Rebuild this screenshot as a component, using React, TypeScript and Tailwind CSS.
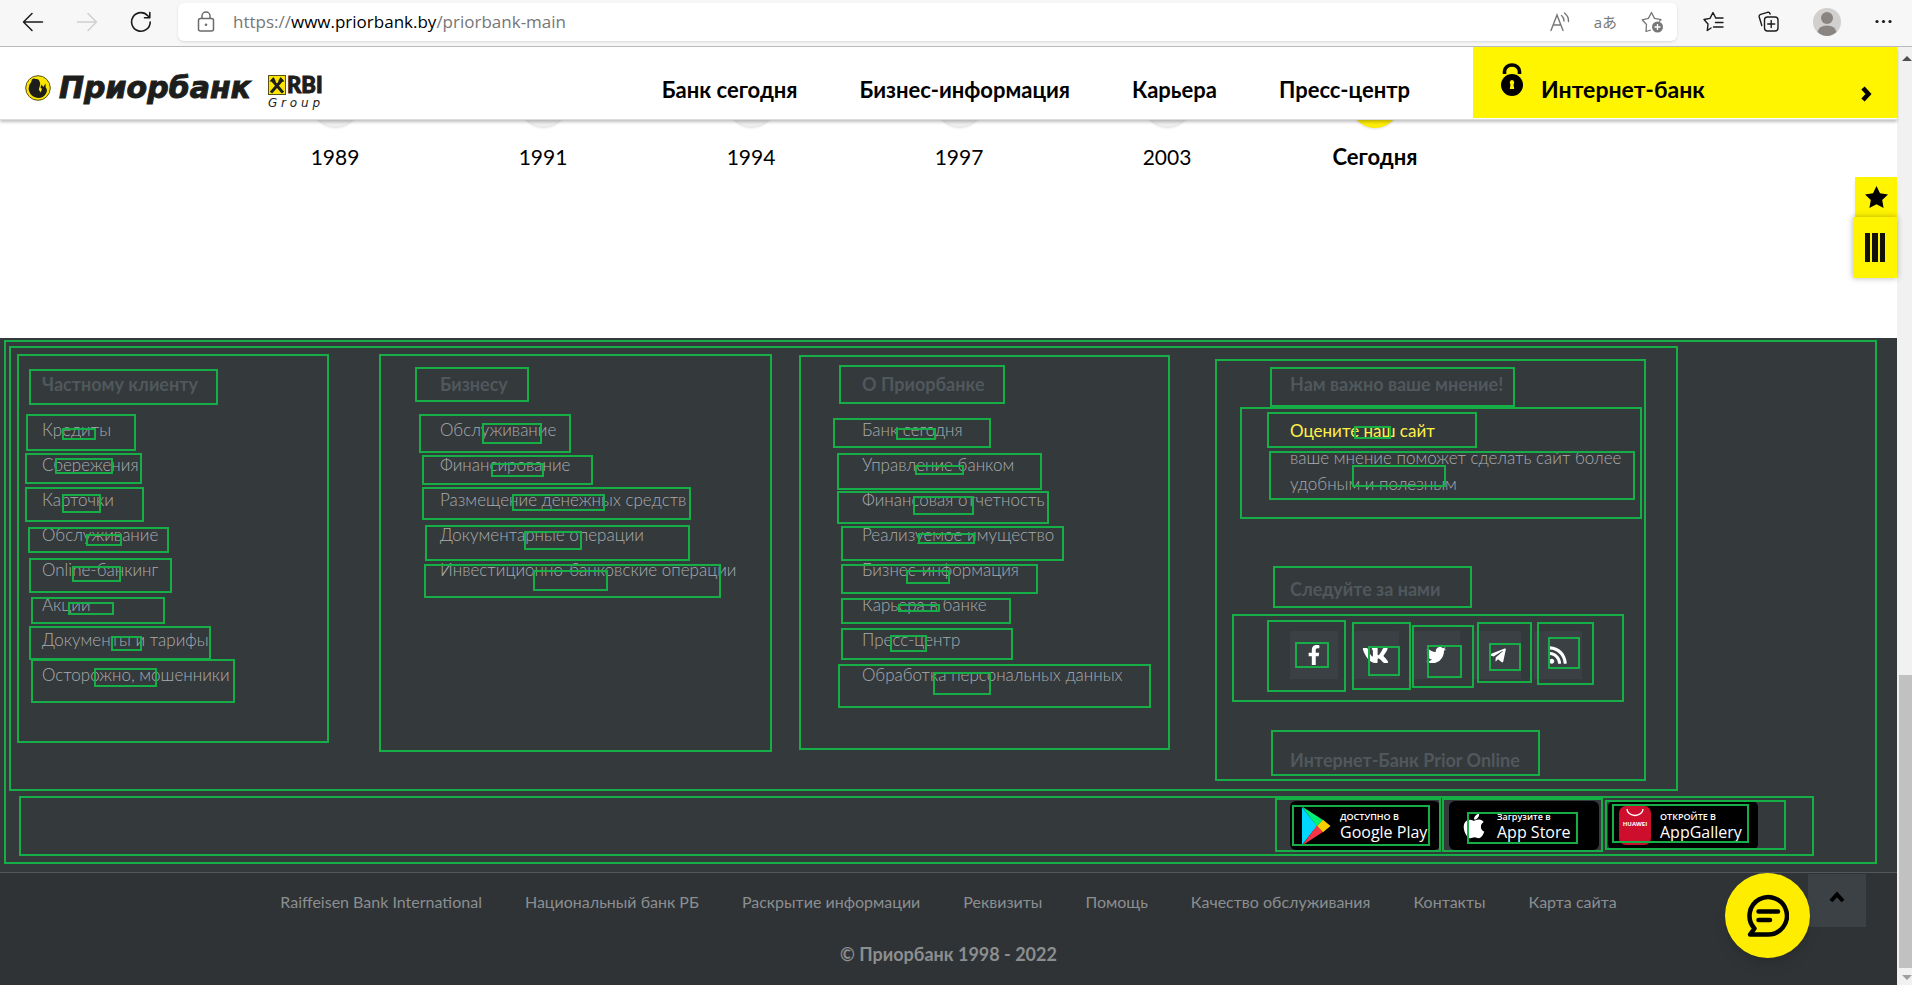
import { ReactNode } from "react";
import { FaFacebookF, FaTwitter, FaVk, FaTelegramPlane, FaRss, FaApple } from "react-icons/fa";

const mainNav = ["Банк сегодня", "Бизнес-информация", "Карьера", "Пресс-центр"];
const years = ["1989", "1991", "1994", "1997", "2003", "Сегодня"];

const columns = [
  {
    title: "Частному клиенту",
    links: ["Кредиты", "Сбережения", "Карточки", "Обслуживание", "Online-банкинг", "Акции", "Документы и тарифы", "Осторожно, мошенники"],
  },
  {
    title: "Бизнесу",
    links: ["Обслуживание", "Финансирование", "Размещение денежных средств", "Документарные операции", "Инвестиционно-банковские операции"],
  },
  {
    title: "О Приорбанке",
    links: ["Банк сегодня", "Управление банком", "Финансовая отчетность", "Реализуемое имущество", "Бизнес-информация", "Карьера в банке", "Пресс-центр", "Обработка персональных данных"],
  },
];

const bottomLinks = ["Raiffeisen Bank International", "Национальный банк РБ", "Раскрытие информации", "Реквизиты", "Помощь", "Качество обслуживания", "Контакты", "Карта сайта"];

const socials: { label: string; icon: ReactNode }[] = [
  { label: "Facebook", icon: <FaFacebookF size={20} /> },
  { label: "VK", icon: <FaVk size={27} /> },
  { label: "Twitter", icon: <FaTwitter size={20} /> },
  { label: "Telegram", icon: <FaTelegramPlane size={19} /> },
  { label: "RSS", icon: <FaRss size={20} /> },
];

// Region outlines: left, top, right, bottom, measured from the top left of the page.
const regions: [number, number, number, number][] = [
  [5, 341, 1876, 863], [10, 347, 1677, 790],
  [18, 355, 328, 742], [30, 370, 217, 404],
  [27, 415, 135, 450], [63, 429, 95, 439],
  [26, 454, 141, 483], [56, 459, 112, 473],
  [26, 488, 143, 521], [63, 495, 100, 512],
  [29, 528, 168, 552], [87, 535, 121, 545],
  [30, 559, 171, 592], [73, 567, 120, 581],
  [32, 598, 164, 623], [69, 603, 113, 614],
  [30, 627, 210, 659], [112, 637, 141, 650],
  [32, 660, 234, 702], [95, 669, 156, 686],
  [380, 355, 771, 751], [416, 368, 528, 401],
  [420, 415, 570, 452], [483, 424, 541, 443],
  [423, 456, 592, 484], [492, 464, 543, 476],
  [423, 488, 690, 519], [513, 495, 604, 510],
  [426, 526, 689, 560], [525, 532, 581, 549],
  [425, 565, 720, 597], [534, 571, 607, 590],
  [800, 356, 1169, 749], [840, 366, 1004, 403],
  [834, 419, 990, 447], [897, 429, 935, 439],
  [838, 454, 1041, 489], [916, 466, 963, 474],
  [838, 492, 1048, 523], [914, 497, 973, 514],
  [842, 527, 1063, 560], [919, 534, 974, 543],
  [842, 565, 1037, 593], [907, 571, 949, 583],
  [842, 599, 1010, 623], [899, 605, 939, 611],
  [842, 629, 1012, 659], [891, 636, 926, 651],
  [839, 665, 1150, 707], [934, 673, 990, 694],
  [1216, 360, 1645, 780], [1271, 368, 1514, 406],
  [1241, 408, 1641, 518],
  [1268, 413, 1476, 447], [1355, 427, 1390, 438],
  [1270, 452, 1634, 499], [1353, 466, 1445, 486],
  [1274, 567, 1471, 607], [1233, 615, 1623, 701],
  [1268, 621, 1345, 691], [1296, 643, 1328, 667],
  [1353, 623, 1410, 689], [1369, 647, 1399, 675],
  [1413, 626, 1473, 687], [1428, 646, 1461, 677],
  [1478, 623, 1531, 682], [1490, 644, 1520, 670],
  [1538, 623, 1593, 684], [1549, 638, 1579, 668],
  [1272, 731, 1539, 775],
  [20, 797, 1813, 855],
  [1276, 799, 1440, 851], [1293, 806, 1429, 845],
  [1443, 799, 1602, 851], [1468, 813, 1577, 843],
  [1606, 801, 1785, 849], [1613, 805, 1748, 842],
];

function Outline() {
  return (
    <svg aria-hidden="true" className="pointer-events-none absolute inset-0 z-20 h-full w-full overflow-visible">
      <g transform="translate(0 -338)" fill="none" stroke="#16ae46" strokeWidth="2">
        {regions.map(([l, t, r, b], i) => (
          <rect key={i} x={l} y={t} width={r - l} height={b - t} />
        ))}
      </g>
    </svg>
  );
}

function BrowserBar() {
  return (
    <div className="flex h-[47px] items-center border-b border-[#bcbcbc] bg-[#f7f7f7] font-['Open_Sans','Noto_Sans_CJK_JP',sans-serif]">
      <div className="flex w-[178px] shrink-0 items-center gap-8 pb-[3px] pl-[22px] text-[#1b1b1b]">
        <button aria-label="Назад">
          <svg width="22" height="22" viewBox="0 0 22 22" fill="none" stroke="currentColor" strokeWidth="1.5" strokeLinecap="round" strokeLinejoin="round"><path d="M20.5 11H1.5M10 2.500L1.500 11L10 19.500" /></svg>
        </button>
        <button aria-label="Вперёд" className="text-[#cfcfcf]">
          <svg width="22" height="22" viewBox="0 0 22 22" fill="none" stroke="currentColor" strokeWidth="1.5" strokeLinecap="round" strokeLinejoin="round"><path d="M1.5 11H20.5M12 2.500L20.500 11L12 19.500" /></svg>
        </button>
        <button aria-label="Обновить">
          <svg width="22" height="22" viewBox="0 0 22 22" fill="none" stroke="currentColor" strokeWidth="1.6" strokeLinecap="round" strokeLinejoin="round"><path d="M20.200 11A9.300 9.300 0 1 1 17.800 4.700L19.500 6.600M19.800 1.500V6.800H14.500" /></svg>
        </button>
      </div>
      <div className="mb-[3px] flex h-[38px] flex-1 items-center rounded-md bg-white pr-[13px] pl-[19px] shadow-sm">
        <svg className="mr-[18px] shrink-0" width="18" height="22" viewBox="0 0 18 22" fill="none" stroke="#6b6b6b" strokeWidth="1.500"><rect x="1.500" y="7.500" width="15" height="12.500" rx="2" /><path d="M5 7.500V5a4 4 0 0 1 8 0V7.500" /><circle cx="9" cy="13.700" r="1.300" fill="#6b6b6b" stroke="none" /></svg>
        <span className="flex-1 text-[17px] text-[#767676]">https://<span className="text-black">www.priorbank.by</span>/priorbank-main</span>
        <div className="flex items-center gap-6 text-[#777]">
          <button aria-label="Прочесть вслух">
            <svg width="20" height="20" viewBox="0 0 20 20" fill="none" stroke="currentColor" strokeWidth="1.400" strokeLinecap="round"><path d="M1 18.500L7 3L13 18.500M3 13H11" /><path d="M11.500 3.500Q14 5.500 14 9M14.500 1Q18.800 4.500 18.500 9.500" /></svg>
          </button>
          <button aria-label="Перевести" className="text-[15px] leading-5">aあ</button>
          <button aria-label="Добавить в избранное">
            <svg width="23" height="22" viewBox="0 0 23 22" fill="none" stroke="currentColor" strokeWidth="1.300" strokeLinejoin="round"><path d="M10 19L5 20.500L5.500 13.500L1.200 8.800L7.400 7.400L10.500 1.500L13.500 7.400L20 8.700L18 10.500" /><circle cx="16.500" cy="16" r="5.500" fill="currentColor" stroke="none" /><path d="M16.500 13V19M13.500 16H19.500" stroke="#fff" /></svg>
          </button>
        </div>
      </div>
      <div className="flex w-[235px] shrink-0 items-center justify-between pr-5 pb-[3px] pl-[26px] text-[#1b1b1b]">
        <button aria-label="Избранное">
          <svg width="21" height="21" viewBox="0 0 21 21" fill="none" stroke="currentColor" strokeWidth="1.400" strokeLinecap="round" strokeLinejoin="round"><path d="M8 17L4.300 19.500L5 13L1 8.500L7 7.400L10 1.500L12.500 6.500M12.500 7H20M12.500 11.500H20M10.500 16H20" /></svg>
        </button>
        <button aria-label="Коллекции">
          <svg width="21" height="21" viewBox="0 0 21 21" fill="none" stroke="currentColor" strokeWidth="1.400" strokeLinecap="round" strokeLinejoin="round"><rect x="6.500" y="6" width="13.500" height="14" rx="3" /><path d="M13.200 9.500V16.500M9.700 13H16.700M3.800 14.500L1.200 6Q0.800 4 2.700 3.300L9.500 1.300Q11.500 0.800 12.200 3" /></svg>
        </button>
        <button aria-label="Профиль">
          <svg width="28" height="28" viewBox="0 0 28 28"><circle cx="14" cy="14" r="14" fill="#d2d0ce" /><circle cx="14" cy="10" r="6" fill="#8a8580" /><path d="M4.500 24Q6 17.500 14 17.500T23.500 24Q19 28 14 28T4.500 24Z" fill="#8a8580" /></svg>
        </button>
        <button aria-label="Меню">
          <svg width="17" height="5" viewBox="0 0 17 5" fill="currentColor"><circle cx="2" cy="2.500" r="1.600" /><circle cx="8.500" cy="2.500" r="1.600" /><circle cx="15" cy="2.500" r="1.600" /></svg>
        </button>
      </div>
    </div>
  );
}

function Logo() {
  return (
    <a href="#" className="flex items-start pt-7 pl-[25px] text-[#1d1d1b]">
      <svg width="26" height="26" viewBox="0 0 26 26"><circle cx="13" cy="13" r="12.300" fill="#fce500" stroke="#55521c" strokeWidth="1" /><path d="M4 16Q2.800 11 6 7.500L7 4.500Q9 3 10.500 4Q13.500 3.500 14.500 6Q16 9 14.500 12L13.800 14.500L15.500 17.500L17 14L15.500 12.500L16.500 9.500L18.300 12L20.500 8.500L20.700 12.500Q23 15 21 18.500Q18.500 23 13 23Q6 22 4 16Z" fill="#1d1d1b" /></svg>
      <span className="ml-2 w-[201px] font-['DejaVu_Sans',sans-serif] text-[30px] leading-[26px] font-bold whitespace-nowrap italic [-webkit-text-stroke:1px_#1d1d1b]">Приорбанк</span>
      <span className="ml-2 flex flex-col gap-[2px]">
        <span className="flex items-center gap-px">
          <svg width="18" height="20" viewBox="0 0 18 20"><rect x="0.500" y="0.500" width="17" height="19" fill="#fce500" stroke="#55521c" /><path d="M4 16.500L13.500 5.500M14 16.500L4.500 5.500" stroke="#1d1d1b" strokeWidth="3" strokeLinecap="square" /><path d="M1.500 6.500L5.500 2L8 6.500Z M16.500 6.500L12.500 2L10 6.500Z" fill="#1d1d1b" /></svg>
          <span className="text-[22px] leading-5 font-black [-webkit-text-stroke:1px_#1d1d1b]">RBI</span>
        </span>
        <span className="font-['DejaVu_Sans',sans-serif] text-[12px] leading-3 whitespace-nowrap italic">G r o u p</span>
      </span>
    </a>
  );
}

function Header() {
  return (
    <header className="relative z-10 flex h-[73px] border-b border-[#dcdcdc] bg-white shadow-[0_2px_3px_rgba(0,0,0,0.25)]">
      <Logo />
      <nav className="ml-auto flex items-center gap-[62px] pt-3 pr-[63px] text-[22px] font-bold text-black">
        {mainNav.map((n) => (
          <a key={n} href="#" className="whitespace-nowrap">{n}</a>
        ))}
      </nav>
      <a href="#" className="flex h-[71px] w-[424px] items-center bg-[#fff500] pt-[14px] pr-[25px] pl-[27px] text-[23px] font-bold text-black">
        <svg className="-mt-5 shrink-0" width="24" height="34" viewBox="0 0 24 34"><path d="M4.500 11V8.500A7.500 6.500 0 0 1 19.500 8.500V11" fill="none" stroke="#000" strokeWidth="3.600" /><circle cx="12" cy="22" r="11" /><path d="M12 17A2.700 2.700 0 0 0 10.500 21.500L9.800 26H14.200L13.500 21.500A2.700 2.700 0 0 0 12 17Z" fill="#fff500" /></svg>
        <span className="ml-[17px] flex-1">Интернет-банк</span>
        <svg className="mt-2" width="11" height="16" viewBox="0 0 11 16" fill="none" stroke="#000" strokeWidth="4.500"><path d="M2 2L7.500 8L2 14" /></svg>
      </a>
    </header>
  );
}

function Timeline() {
  return (
    <section className="relative h-[218px] bg-white">
      <ol className="grid grid-cols-[repeat(6,208fr)_418fr] pl-[231px]">
        {years.map((y, i) => {
          const current = i === years.length - 1;
          return (
            <li key={y} className="flex flex-col items-center text-[22px] leading-7 text-black">
              <span className={current ? "-mt-10 mb-[15px] size-12 rounded-full bg-[#ffed00] shadow" : "-mt-10 mb-4 size-[47px] rounded-full bg-[#efefef] shadow-sm"} />
              <span className={current ? "font-bold" : "text-[21px]"}>{y}</span>
            </li>
          );
        })}
      </ol>
      <div className="absolute top-[57px] right-0 flex flex-col items-end">
        <button aria-label="Избранное" className="flex h-10 w-[42px] items-center justify-center bg-[#fff500] shadow-md">
          <svg width="23" height="22" viewBox="0 0 23 22"><path d="M11.500 0L15 7.300L23 8.400L17.200 14L18.600 22L11.500 18.200L4.400 22L5.800 14L0 8.400L8 7.300Z" /></svg>
        </button>
        <button aria-label="Сравнение" className="flex h-[61px] w-11 items-center justify-center gap-[2px] bg-[#fff500] shadow-[0_0_6px_rgba(0,0,0,0.3)]">
          <span className="h-[29px] w-[5px] bg-[#11110a]" />
          <span className="h-[29px] w-[6px] bg-[#11110a]" />
          <span className="h-[29px] w-[5px] bg-[#11110a]" />
        </button>
      </div>
    </section>
  );
}

function Title({ children }: { children: ReactNode }) {
  return <h2 className="text-[18px] leading-6 font-bold whitespace-nowrap text-[#50585c]">{children}</h2>;
}

function Badge({ icon, top, name }: { icon: ReactNode; top: string; name: string }) {
  return (
    <a href="#" className="flex h-[49px] w-[150px] items-center gap-[9px] rounded-md bg-black pl-[11px] text-white">
      {icon}
      <span className="flex flex-col font-['Open_Sans',sans-serif] whitespace-nowrap">
        <span className="text-[9px] leading-3 font-semibold">{top}</span>
        <span className="text-[16px] leading-[18px] font-medium">{name}</span>
      </span>
    </a>
  );
}

function Footer() {
  return (
    <footer className="relative">
      <div className="grid h-[534px] grid-cols-[398fr_422fr_428fr_607fr] bg-[#34393c] pt-[34px] pl-[42px]">
        {columns.map((c) => (
          <div key={c.title}>
            <Title>{c.title}</Title>
            <ul className="mt-4 text-[17px] leading-[35px] font-light text-[#a9acae]">
              {c.links.map((l) => (
                <li key={l}><a href="#" className="whitespace-nowrap">{l}</a></li>
              ))}
            </ul>
          </div>
        ))}
        <div>
          <Title>Нам важно ваше мнение!</Title>
          <div className="mt-[21px] text-[17px] font-light text-[#a9acae]">
            <a href="#" className="block leading-7 font-normal text-[#fff04a]">Оцените наш сайт</a>
            <p className="w-[340px] leading-[26px]">ваше мнение поможет сделать сайт более удобным и полезным</p>
          </div>
          <div className="mt-20"><Title>Следуйте за нами</Title></div>
          <div className="mt-[30px] flex gap-[13px]">
            {socials.map((s) => (
              <a key={s.label} href="#" aria-label={s.label} className="flex size-12 items-center justify-center bg-[#3a4044] text-white">{s.icon}</a>
            ))}
          </div>
          <div className="mt-[69px]"><Title>Интернет-Банк Prior Online</Title></div>
          <div className="mt-[29px] flex gap-[9px]">
            <Badge
              top="ДОСТУПНО В"
              name="Google Play"
              icon={<svg className="shrink-0" width="30" height="40" viewBox="0 0 30 40"><path d="M1 1V39L16 20Z" fill="#00d7fe" /><path d="M1 0.500L22 14L16 20.500Z" fill="#00f076" /><path d="M1 39.500L22 26L16 19.500Z" fill="#f63448" /><path d="M22 13.700L29.500 20L22 26.300L16.300 20Z" fill="#ffce00" /></svg>}
            />
            <Badge top="Загрузите в" name="App Store" icon={<FaApple className="shrink-0" size={28} />} />
            <Badge
              top="ОТКРОЙТЕ В"
              name="AppGallery"
              icon={
                <svg className="shrink-0" width="32" height="39" viewBox="0 0 32 39"><rect width="32" height="39" rx="7" fill="#ce0e2d" /><path d="M8 3A8 6.500 0 0 0 24 3" fill="none" stroke="#fff" strokeWidth="1.300" /><text x="16" y="20" textAnchor="middle" fill="#fff" fontSize="6" fontWeight="700" fontFamily="Open Sans">HUAWEI</text></svg>
              }
            />
          </div>
        </div>
      </div>
      <div className="flex min-h-[113px] flex-col items-center border-t border-[#53575a] bg-[#2f3336] pt-[17px] text-[#8b8e90]">
        <nav className="flex gap-[43px] text-[16px] leading-6">
          {bottomLinks.map((l) => (
            <a key={l} href="#" className="whitespace-nowrap">{l}</a>
          ))}
        </nav>
        <p className="mt-7 text-[18px] leading-6 font-bold">© Приорбанк 1998 - 2022</p>
      </div>
      <Outline />
      <button aria-label="Наверх" className="absolute right-[31px] bottom-[58px] flex h-[53px] w-[58px] items-center justify-center bg-[#3c4145]">
        <svg className="-mt-2" width="16" height="12" viewBox="0 0 16 12" fill="none" stroke="#000" strokeWidth="4"><path d="M2 10L8 3.500L14 10" /></svg>
      </button>
      <button aria-label="Чат" className="absolute right-[87px] bottom-[27px] flex size-[85px] items-center justify-center rounded-full bg-[#ffed00] shadow-lg">
        <svg width="42" height="43" viewBox="0 0 42 43" fill="none" stroke="#000" strokeWidth="4.500" strokeLinecap="round" strokeLinejoin="round"><path d="M21 40.500H3L7.500 34.500A18.700 18.700 0 1 1 21 40.500Z" /><path d="M11.500 17.500H31M11.500 26H23" /></svg>
      </button>
    </footer>
  );
}

export default function App() {
  return (
    <div className="min-h-screen overflow-hidden bg-white font-['Lato','Open_Sans',sans-serif]">
      <BrowserBar />
      <div className="flex">
        <main className="min-w-0 flex-1">
          <Header />
          <Timeline />
          <Footer />
        </main>
        <div aria-hidden="true" className="flex w-[15px] shrink-0 flex-col bg-[#f1f1f1] pl-[2px]">
          <svg className="mt-[9px]" width="13" height="5" viewBox="0 0 13 5"><path d="M3 5L8 0L13 5Z" fill="#505050" /></svg>
          <div className="mt-auto h-[293px] bg-[#c1c1c1]" />
          <svg className="mt-[7px] mb-[5px]" width="13" height="5" viewBox="0 0 13 5"><path d="M3 0L8 5L13 0Z" fill="#a0a0a0" /></svg>
        </div>
      </div>
    </div>
  );
}
